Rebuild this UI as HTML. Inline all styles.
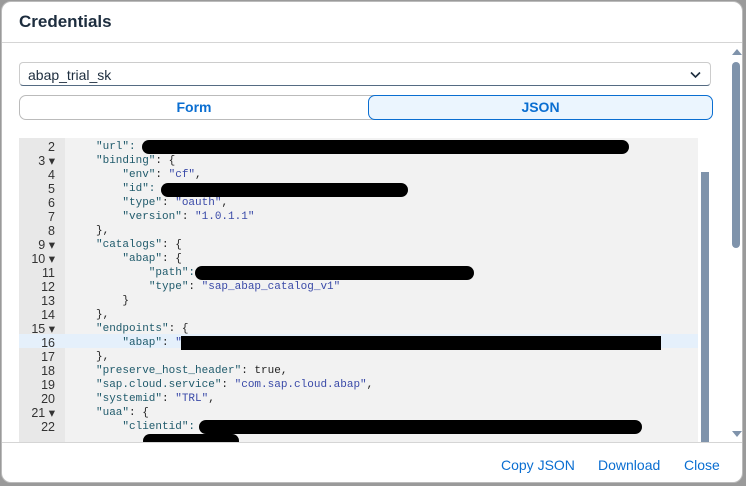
<!DOCTYPE html>
<html><head><style>
body{margin:0;width:746px;height:486px;background:#9a9a9a;overflow:hidden;font-family:"Liberation Sans",sans-serif;position:relative}
.dlg{position:absolute;left:1px;top:1px;width:740px;height:480px;background:#fff;border-radius:10px;border:1px solid #bbb;overflow:hidden}
.hdr{position:absolute;left:0;top:0;right:0;height:40px;border-bottom:1px solid #d5d5d5}
.hdr span{position:absolute;left:17px;top:10px;font-size:17px;font-weight:bold;color:#1d2d3e}
.sel{position:absolute;left:17px;top:60px;width:692px;height:24px;border:1px solid #ccc;border-bottom:1px solid #556b82;border-radius:4px;font-size:14px;color:#1d2d3e;line-height:24px;box-sizing:border-box;padding-left:8px}
.seg{position:absolute;left:17px;top:93px;width:693px;height:25px;border:1px solid #bbb;border-radius:7px;box-sizing:border-box}
.seg div{position:absolute;top:0;height:23px;line-height:23px;text-align:center;font-weight:bold;font-size:14px;color:#0a6ed1}
.on{left:348px;width:343px;background:#ebf5fe;border:1px solid #0a6ed1;border-radius:7px;top:-1px!important;height:23px}
.ed{position:absolute;left:17px;top:136px;width:679px;height:304px;background:#f2f2f2;overflow:hidden}
.gut{position:absolute;left:0;top:0;width:46px;height:100%;background:#e8e8e8}
.ln{position:absolute;height:14px;font:11px/14px "Liberation Mono",monospace;white-space:pre}
.n{left:0;width:36px;text-align:right;color:#333;font:12.5px/14px "Liberation Sans",sans-serif}
.c{left:77px;color:#222}
.k{color:#1f5a6b}.s{color:#3a4aa8}
.hl{position:absolute;left:0;width:679px;height:14px;background:#e5f0fb}
.r{position:absolute;background:#000;border-radius:7px;height:14px}
.esb{position:absolute;left:698px;top:136px;width:10px;height:304px;background:#fff}
.esb div{position:absolute;left:1px;top:34px;width:8px;height:270px;background:#7f93ab}
.osb{position:absolute;left:729px;top:42px;width:11px;height:398px}
.ft{position:absolute;left:0;right:0;top:440px;height:40px;border-top:1px solid #d5d5d5}
.b{position:absolute;top:14px;font-size:14px;color:#0a6ed1}
</style></head><body>
<div class="dlg">
<div class="hdr"><span>Credentials</span></div>
<div class="sel">abap_trial_sk<svg style="position:absolute;right:9px;top:8px" width="11" height="8"><path d="M1 1.5L5.5 6L10 1.5" stroke="#1d2d3e" stroke-width="1.6" fill="none"/></svg></div>
<div class="seg"><div style="left:0;width:348px">Form</div><div class="on">JSON</div></div>
<div class="ed">
<div class="gut"></div>
<div class="hl" style="top:196px"></div>
<div class="ln n" style="top:2px">2</div><div class="ln c k" style="top:2px">"url":</div>
<div class="ln n" style="top:16px">3 ▾</div><div class="ln c" style="top:16px"><span class="k">"binding"</span>: {</div>
<div class="ln n" style="top:30px">4</div><div class="ln c" style="top:30px">    <span class="k">"env"</span>: <span class="s">"cf"</span>,</div>
<div class="ln n" style="top:44px">5</div><div class="ln c k" style="top:44px">    "id":</div>
<div class="ln n" style="top:58px">6</div><div class="ln c" style="top:58px">    <span class="k">"type"</span>: <span class="s">"oauth"</span>,</div>
<div class="ln n" style="top:72px">7</div><div class="ln c" style="top:72px">    <span class="k">"version"</span>: <span class="s">"1.0.1.1"</span></div>
<div class="ln n" style="top:86px">8</div><div class="ln c" style="top:86px">},</div>
<div class="ln n" style="top:100px">9 ▾</div><div class="ln c" style="top:100px"><span class="k">"catalogs"</span>: {</div>
<div class="ln n" style="top:114px">10 ▾</div><div class="ln c" style="top:114px">    <span class="k">"abap"</span>: {</div>
<div class="ln n" style="top:128px">11</div><div class="ln c k" style="top:128px">        "path":</div>
<div class="ln n" style="top:142px">12</div><div class="ln c" style="top:142px">        <span class="k">"type"</span>: <span class="s">"sap_abap_catalog_v1"</span></div>
<div class="ln n" style="top:156px">13</div><div class="ln c" style="top:156px">    }</div>
<div class="ln n" style="top:170px">14</div><div class="ln c" style="top:170px">},</div>
<div class="ln n" style="top:184px">15 ▾</div><div class="ln c" style="top:184px"><span class="k">"endpoints"</span>: {</div>
<div class="ln n" style="top:198px">16</div><div class="ln c" style="top:198px">    <span class="k">"abap"</span>: <span class="s">"</span></div>
<div class="ln n" style="top:212px">17</div><div class="ln c" style="top:212px">},</div>
<div class="ln n" style="top:226px">18</div><div class="ln c" style="top:226px"><span class="k">"preserve_host_header"</span>: true,</div>
<div class="ln n" style="top:240px">19</div><div class="ln c" style="top:240px"><span class="k">"sap.cloud.service"</span>: <span class="s">"com.sap.cloud.abap"</span>,</div>
<div class="ln n" style="top:254px">20</div><div class="ln c" style="top:254px"><span class="k">"systemid"</span>: <span class="s">"TRL"</span>,</div>
<div class="ln n" style="top:268px">21 ▾</div><div class="ln c" style="top:268px"><span class="k">"uaa"</span>: {</div>
<div class="ln n" style="top:282px">22</div><div class="ln c k" style="top:282px">    "clientid":</div>
<div class="r" style="left:123px;top:2px;width:487px"></div>
<div class="r" style="left:142px;top:45px;width:247px"></div>
<div class="r" style="left:176px;top:128px;width:279px"></div>
<div class="r" style="left:162px;top:198px;width:480px;border-radius:0"></div>
<div class="r" style="left:180px;top:282px;width:443px"></div>
<div class="r" style="left:124px;top:296px;width:96px"></div>
</div>
<div class="esb"><div></div></div>
<div class="osb"><svg style="position:absolute;left:1px;top:4px" width="10" height="8"><path d="M0 7L5 1L10 7Z" fill="#7f93ab"/></svg><div style="position:absolute;left:1px;top:18px;width:8px;height:186px;background:#7f93ab;border-radius:4px"></div><svg style="position:absolute;left:1px;top:386px" width="10" height="8"><path d="M0 1L5 7L10 1Z" fill="#7f93ab"/></svg></div>
<div class="ft"><span class="b" style="left:499px">Copy JSON</span><span class="b" style="left:596px">Download</span><span class="b" style="left:682px">Close</span></div>
</div>
</body></html>
